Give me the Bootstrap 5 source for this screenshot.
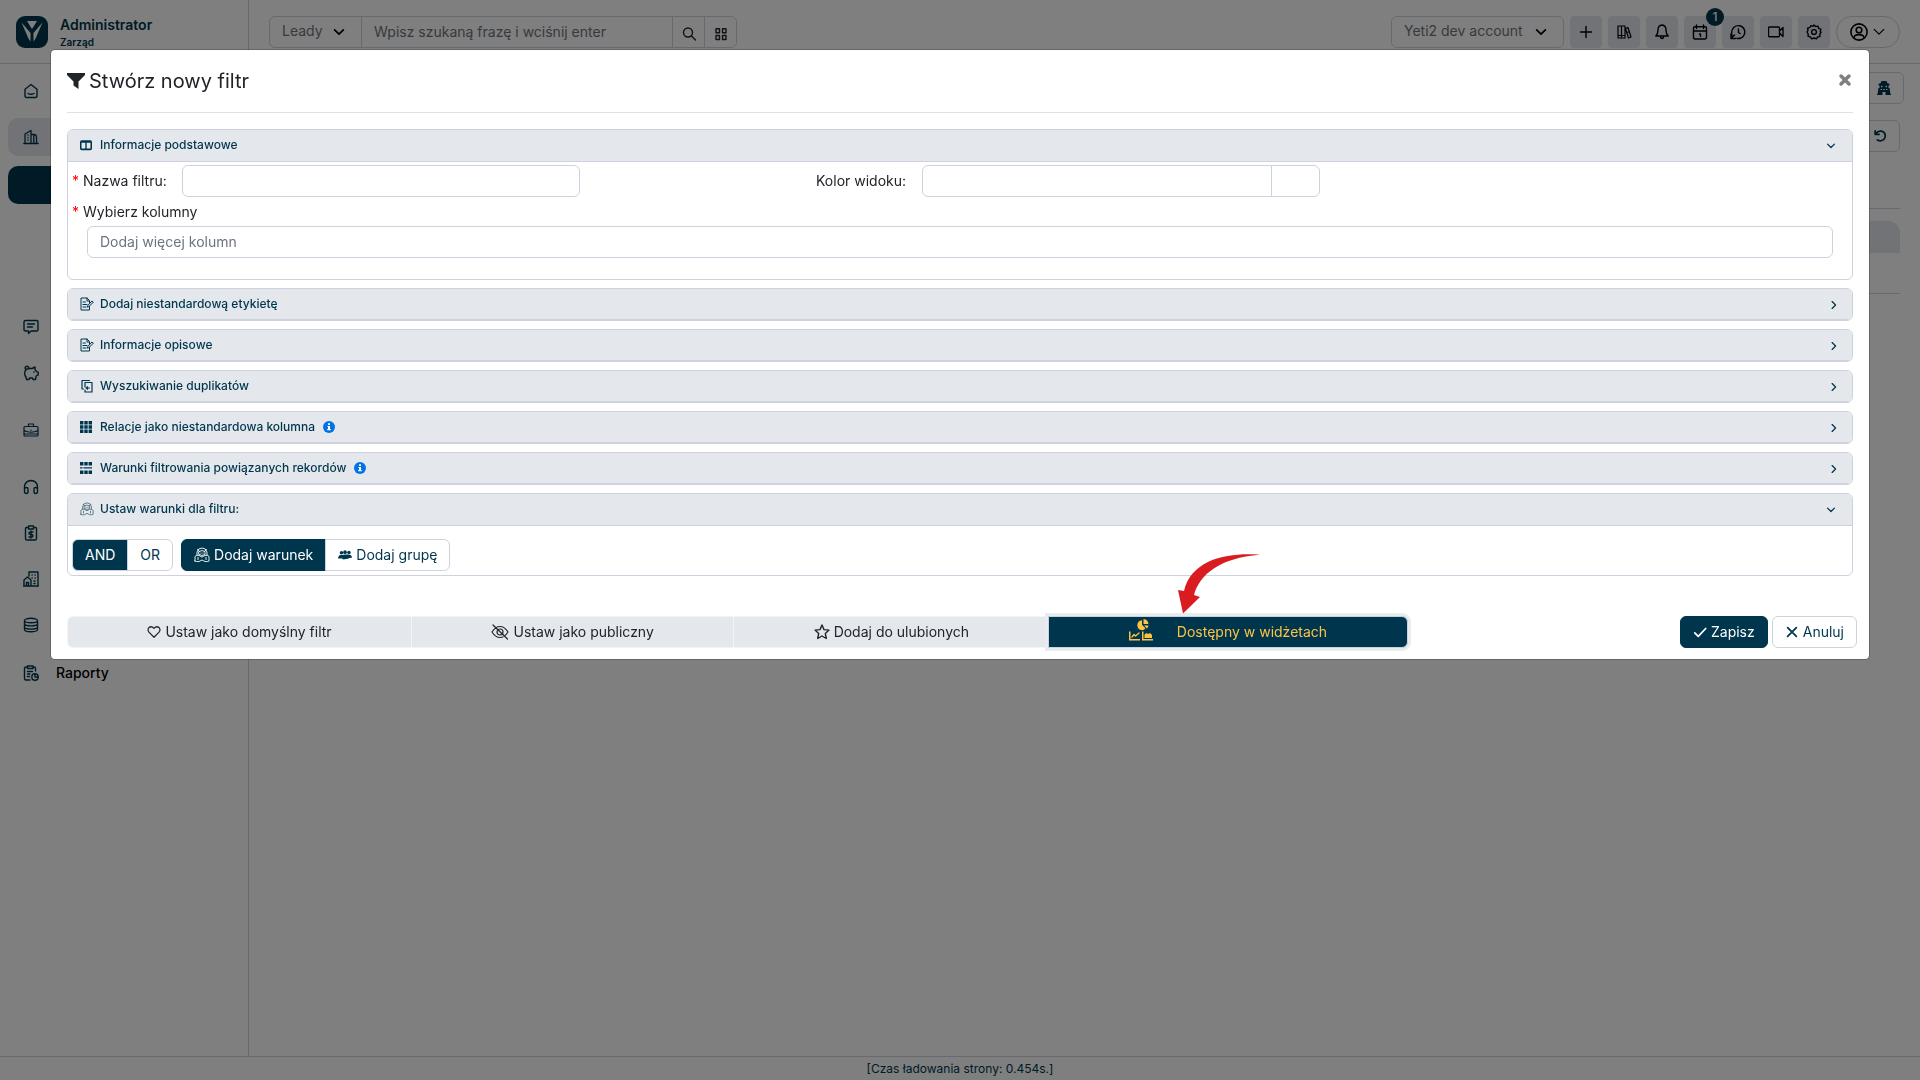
<!DOCTYPE html>
<html lang="pl">
<head>
<meta charset="utf-8">
<meta name="viewport" content="width=device-width, initial-scale=1">
<title>Stwórz nowy filtr</title>
<link rel="stylesheet" href="https://cdn.jsdelivr.net/npm/bootstrap@5.3.0/dist/css/bootstrap.min.css">
<style>
:root{--navy:#00364d;--line:#cdd2de;--soft:#e4e7ec}
body{font-family:Inter,"Noto Sans",sans-serif;font-size:14px;line-height:20px;color:#212529;overflow:hidden}
.ico{width:16px;height:16px;flex:none;fill:none;stroke:currentColor;stroke-width:1.4;stroke-linecap:round;stroke-linejoin:round}
.solid{fill:currentColor;stroke:none}
.ico-sm{width:14px;height:14px}
.ico-lg{width:18px;height:18px}
.navy{color:var(--navy)}
.line{border-color:var(--line)!important}
/* application shell */
.topbar{height:64px}
.topbar-main{padding:16px 20px 0}
.side{width:249px;flex:none}
.logo{width:32px;height:32px}
.who{font-size:14px;line-height:18px;font-weight:600}
.who-sub{font-size:10px;line-height:16px;font-weight:600}
.searchbar{width:468px}
.searchbar .form-select{flex:0 0 93px}
.form-control,.form-select{font-size:14px;line-height:20px;height:32px;padding:4px 12px 6px;border-color:var(--line);border-radius:6px}
.form-select{background-image:url("data:image/svg+xml,%3csvg xmlns='http://www.w3.org/2000/svg' viewBox='0 0 16 16'%3e%3cpath fill='none' stroke='%23000' stroke-width='2' stroke-linecap='round' stroke-linejoin='round' d='M3 5.500l5 5 5-5'/%3e%3c/svg%3e");background-size:14px 14px;background-position:right 15px center;color:#6c757d}
.searchbar .btn{width:33px;height:32px;padding:0;border:1px solid var(--line);border-radius:6px}
.account{width:173px}
.tools{gap:6px}
.tool{width:32px;height:32px;padding:0;border:0;border-radius:4px;background:#e4e6ef;display:flex;align-items:center;justify-content:center}
.user{width:64px;height:32px;padding:0;border:1px solid var(--line);border-radius:16px;color:#000}
.count{width:18px;height:18px;font-size:12px;line-height:18px;padding:0;background:var(--navy);top:-8px;right:-8px;font-weight:500}
.side-nav{padding:8px;gap:8px}
.side-nav .nav-link{height:38px;padding:0 15px;border-radius:10px;color:var(--navy);display:flex;align-items:center}
.side-nav .active{background:#e4e6ef}
.side-main{height:38px;border-radius:10px;background:var(--navy);border:0;margin:2px 0 96px}
.section-gap{margin-top:11px}
.last-gap{margin-top:2px}
.side-text{margin-left:17px;color:#000;font-weight:500}
.side-btn{width:40px;height:32px;padding:0;border-radius:6px}
.list-head{height:32px;background:#e4e6ef;border-radius:12px 12px 0 0}
.load-time{font-size:12px;line-height:24px;height:24px}
/* dialog */
.modal-backdrop{opacity:.5}
.modal-dialog{max-width:none;margin:49px 50px}
.modal-content{border-radius:5px;border-color:rgba(0,0,0,.2)}
.modal-header{margin:0 16px;padding:0 0 1px;height:63px;border-color:#dde0e7}
.modal-title{font-size:20px;line-height:28px;font-weight:400}
.btn-x{border:0;background:none;padding:0 1px 4px;color:#7f7f7f}
.modal-body{padding:16px 16px 0}
.panel{border:1px solid var(--line);border-radius:6px;margin-bottom:8px;overflow:hidden}
.panel-top{height:32px;padding:0 12px 2px;background:var(--soft);border:0;border-bottom:1px solid var(--line);color:var(--navy);font-size:12px;font-weight:500;width:100%;text-align:left;display:flex;align-items:center;gap:6px}
.panel-name{line-height:18px}
.ico-block{width:12px;height:12px;margin-right:2px}
.hint{width:12px;height:12px;margin-left:2px}
.panel .arrow{width:10px;height:10px;margin:3px 4px 0 auto;stroke-width:2}
.panel.closed .panel-top{height:31px;padding-bottom:1px}
.panel.closed .arrow{margin-right:1px}
.panel .fields{padding:3px 4px 21px}
.star{color:red;font-size:14px;width:11px;display:inline-block}
.fld-label{width:110px;flex:none;line-height:20px}
.cols-label{padding-top:5px}
.half{width:calc(54% - 2px);flex:none}
.swatch{width:49px;flex:none;background:#fff}
.pick{margin:4px 15px 0}
.form-control::placeholder{color:#6c757d}
.rules{padding:13px 4px 4px;gap:8px}
.modal .btn{font-size:14px;line-height:20px;padding:5px 12px;border-radius:6px}
.btn-navy{--bs-btn-bg:var(--navy);--bs-btn-color:#fff;--bs-btn-border-color:var(--navy);--bs-btn-hover-bg:#00283a;--bs-btn-hover-color:#fff}
.btn-plain{--bs-btn-bg:#fff;--bs-btn-color:var(--navy);--bs-btn-border-color:var(--line);--bs-btn-hover-bg:var(--soft)}
.modal .btn-group:not(.flags)>.btn{display:inline-flex;align-items:center;gap:4px;flex:none}
.modal .btn-group>.btn:not(:last-child){border-top-right-radius:0;border-bottom-right-radius:0}
.modal .btn-group>.btn:not(:nth-child(-n+2)),.modal .btn-group>button+button{border-top-left-radius:0;border-bottom-left-radius:0}
.btn-check:checked+.btn-plain{background:var(--navy);color:#fff;border-color:var(--line)}
.modal-footer{border:0;padding:40px 12px 11px 16px;flex-wrap:nowrap}
.modal-footer>*{margin:0}
.flags{width:calc(75% - 2px)}
.flags>.btn{display:flex;align-items:center;justify-content:center;gap:4px;background:var(--soft);border:1px solid #f3f4f7;color:#212529}
.flags>.btn-check:checked+.btn{background:var(--navy);border-color:#c9d3df;color:#fdc345;box-shadow:0 0 0 3px #e9ebec;gap:24px}
.widget-ico{width:24px;height:24px;margin:-3px 0 -1px}
.pointer{left:129px;bottom:33px;width:82px;height:60px;pointer-events:none}
.acts .btn{display:flex;align-items:center;gap:4px}
.acts .ico{stroke-width:2}
</style>
<script src="https://cdn.jsdelivr.net/npm/bootstrap@5.3.0/dist/js/bootstrap.bundle.min.js"></script>
</head>
<body>
<svg class="d-none" aria-hidden="true">
  <symbol id="house" viewBox="0 0 16 16"><path d="M2 6.200 8 1.500l6 4.700V13q0 1.500-1.500 1.500h-9Q2 14.500 2 13zM5 10.500q3 1.600 6 0"/></symbol>
  <symbol id="city" viewBox="0 0 16 16"><path d="M.8 14.500h14.400M2 14.500V5l6-3.500v13M8 5.500h3.500q2 .5 2 2.500v6.500M10.800 6v8.500M5 6v.3M5 8.500v.3M5 11v.3" stroke-width="1.300"/></symbol>
  <symbol id="chat" viewBox="0 0 16 16"><path d="M2.500 1.500h11q1.500 0 1.500 1.500v7.500q0 1.500-1.500 1.500H8l-2.500 2.500V12h-3Q1 12 1 10.500V3q0-1.500 1.500-1.500zM4.500 5h7M4.500 8h5"/></symbol>
  <symbol id="pig" viewBox="0 0 16 16"><path d="M3 4.500q-1.500-1-.5-2.500 1.500-1.500 3 0L6 3.500h3L12 2v2.500l1.500 2.200 1.700.5v2.600l-2 1.200-.7 3.500H10l-.5-1.500h-3L6 14.500H3.500L3 12Q.2 8.500 3 4.500L6 3.500M11 7v.2"/></symbol>
  <symbol id="case" viewBox="0 0 16 16"><path d="M2 4.500h12q1 0 1 1v7.500q0 1-1 1H2q-1 0-1-1V5.500q0-1 1-1zM5.500 4.500V2h5v2.500M1 8.500q7 3.500 14 0M8 8v.5M1 12h14" stroke-width="1.200"/></symbol>
  <symbol id="phones" viewBox="0 0 16 16"><path d="M1.500 12V7.500q.8-5.800 6.500-6 5.700.2 6.500 6V12M1.500 10q0-1.500 2-1.500 1.500 0 1.500 1.500v3q0 1.500-1.500 1.500-2 0-2-2zM14.500 10q0-1.500-2-1.500-1.500 0-1.500 1.500v3q0 1.500 1.500 1.500 2 0 2-2z"/></symbol>
  <symbol id="money" viewBox="0 0 16 16"><path d="M5 2.500H3.500q-1 0-1 1v10q0 1.500 1.500 1.500h8q1.500 0 1.500-1.500v-10q0-1-1-1H11M5.500 1h5v3h-5zM10 7H7.500Q6 7 6 8.200t1.500 1.200h1Q10 9.400 10 10.700T8.500 12H6M8 6v7"/></symbol>
  <symbol id="estate" viewBox="0 0 16 16"><path d="M1 15V9l3.500-3L8 9v6M.5 15h15M6 5V1h9v14M3.500 15v-3.500h2V15M9 4h.2M12 4h.2M9 7h.2M12 7h.2M11 10h1M11 12.500h1"/></symbol>
  <symbol id="db" viewBox="0 0 16 16"><path d="M1.500 3.500c0-3 13-3 13 0s-13 3-13 0v9c0 3 13 3 13 0v-9M1.500 7c1 2.500 12 2.500 13 0M1.500 10.200c1 2.500 12 2.500 13 0"/></symbol>
  <symbol id="report" viewBox="0 0 16 16"><path d="M4.500 2H3Q1.500 2 1.500 3.500v10Q1.500 15 3 15h4M11 2q1.500 0 1.500 1.500V6M4.500 1H10v2.500H4.500zM4.500 6.500h5M4.500 9H7M4.500 11.500h2"/><circle cx="12" cy="12" r="3.200"/><path d="M12 9v3h3"/></symbol>
  <symbol id="search" viewBox="0 0 16 16"><circle cx="7" cy="6.500" r="4.500"/><path d="m10.500 10 4 4"/></symbol>
  <symbol id="tiles" viewBox="0 0 16 16"><path d="M3 2.800h3.500v4H3zM9.500 2.800H13v4H9.500zM3 9.500h3.500v4H3zM9.500 9.500H13v4H9.500z"/></symbol>
  <symbol id="plus" viewBox="0 0 16 16"><path d="M8 2.500v11M2.500 8h11"/></symbol>
  <symbol id="books" viewBox="0 0 16 16"><path d="M2 2h3.500v12H2zM5.500 2H9v12H5.500zM9.500 4.500l2.500-1 3 9.500-2.500 1zM2 11.500h7M10.800 8.500l2.500-.8" stroke-width="1.200"/></symbol>
  <symbol id="bell" viewBox="0 0 16 16"><path d="M8 1q4 .5 4 5 0 4 2.200 6H1.800Q4 10 4 6q0-4.500 4-5zM6.500 12.500q0 2 1.500 2t1.500-2"/></symbol>
  <symbol id="cal" viewBox="0 0 16 16"><path d="M3 2.800h10q1.500 0 1.500 1.500v9Q14.500 15 13 15H3q-1.500 0-1.500-1.500v-9Q1.500 2.800 3 2.800zM1.500 7h13M4.500 1v3.500M11.500 1v3.500M7.500 10h1v2.500"/></symbol>
  <symbol id="history" viewBox="0 0 16 16"><path d="M2 11.500Q.5 6.500 4 3.200 7 .8 10.500 2q3.800 1.500 4.300 5.500.1 4.500-3.800 6.500-2.500.8-4 .3M1 10v4.500h4.500M1.500 14l3-3M8.500 5v3.500L10 9.500"/></symbol>
  <symbol id="video" viewBox="0 0 16 16"><path d="M1.500 3h8.800q1.200 0 1.200 1.200v7.300q0 1.200-1.200 1.200H1.500Q.5 12.700.5 11.500V4.200Q.5 3 1.500 3zM11.500 7l3.500-3.500v9L11.500 9"/></symbol>
  <symbol id="gear" viewBox="0 0 16 16"><circle cx="8" cy="8" r="2.400"/><path d="m8 1 1.700 1.600 2.300-.5.600 2.200 2.200.8-.5 2.300L15 8.500l-1.200 1.700.1 2.300-2.200.4-1.300 1.900L8 14l-2.300.9-1.400-2-2.200-.5.100-2.300L1 8l1-1.600-.4-2.200 2.200-.7L5 1.600l2 .8z"/></symbol>
  <symbol id="user" viewBox="0 0 16 16"><circle cx="8" cy="8" r="7.200"/><circle cx="8" cy="6.200" r="2.500"/><path d="M3.500 13q.5-2.700 4.500-2.700t4.500 2.700"/></symbol>
  <symbol id="down" viewBox="0 0 16 16"><path d="m2.500 5 5.500 5.500L13.500 5"/></symbol>
  <symbol id="right" viewBox="0 0 16 16"><path d="M5 2.500 10.500 8 5 13.500"/></symbol>
  <symbol id="shrine" viewBox="0 0 16 16"><path d="M5.500 1h5l.8 2 2.200 1v1.500h-1V8h1L14 11v1l1 3H9.500v-3h-3v3H1l1-3v-1l.5-3h1V5.500h-1V4l2.200-1zM5 5.800v1.400h1.500V5.800zm4.500 0v1.400H11V5.800zM4.500 9v1H6V9zM7.200 9v1h1.600V9zM10 9v1h1.500V9z" fill-rule="evenodd"/></symbol>
  <symbol id="undo" viewBox="0 0 16 16"><path d="M3 5.500q2.500-3.500 6.500-3 4.500 1 4.500 5.500-.5 5-5.500 5.500-2 0-3.500-1M2.500 2v4H7" stroke-width="2"/></symbol>
  <symbol id="funnel" viewBox="0 0 18 16"><path d="M0 0h18v2l-6.500 6.500V16l-5-3.500v-4L0 2z"/></symbol>
  <symbol id="cols" viewBox="0 0 14 14"><path d="M2 1.500h10q2 0 2 2v8q0 1.500-2 1.500H2q-2 0-2-1.500v-8q0-2 2-2zM1.800 4.500v6.700h4.400V4.500zm6 0v6.700h4.400V4.500z" fill-rule="evenodd"/></symbol>
  <symbol id="note" viewBox="0 0 14 14"><path d="M9.500 9.500V13H1V1h6l2.500 2.500V6M7 1v3h2.500M3 5h2.500M3 7.500h4M3 10h3M7.500 9.800l.4-1.500L12 4l1.300 1.200L9 9.500z" stroke-width="1"/></symbol>
  <symbol id="copy" viewBox="0 0 14 14"><path d="M3.500 10H2V1.500h7.500M5 8V3.500h7V13H5v-2M9.500 9H6.500M7.500 7.800 6.200 9l1.300 1.200" stroke-width="1.200"/></symbol>
  <symbol id="grid9" viewBox="0 0 14 14"><path d="M0 0h4v4H0zM5 0h4v4H5zM10 0h4v4h-4zM0 5h4v4H0zM5 5h4v4H5zM10 5h4v4h-4zM0 10h4v4H0zM5 10h4v4H5zM10 10h4v4h-4z"/></symbol>
  <symbol id="gridrow" viewBox="0 0 14 14"><path d="M0 0h4v4H0zM5 0h4v4H5zM10 0h4v4h-4zM0 6h3v1.500H0zM4 6h10v1.500H4zM0 10h4v4H0zM5 10h4v4H5zM10 10h4v4h-4z"/></symbol>
  <symbol id="cond" viewBox="0 0 16 16"><path d="M3 8V5q1-4 5-4t5 4v3M5 4.500q3-2 6 0v3q-3 2-6 0zM1 14V9.500q1.500-2 4-1L8 10l3-1.500q2.500-1 4 1V14q-1.500 1-4 .5L8 13l-3 1.500Q2.500 15 1 14zM4 10.500v2M12 10.500v2M7 6v.2M9 6v.2M3.500 2.500l2 2M12.500 2.500l-2 2" stroke-width=".9"/></symbol>
  <symbol id="people" viewBox="0 0 16 16"><circle cx="4" cy="5.500" r="2"/><circle cx="8" cy="4.800" r="2.100"/><circle cx="12.500" cy="5" r="2"/><path d="M0 12q.5-4 3-4h2q2-1 5-.5Q15.500 6.500 16 11l-3 .5-1.500.8-6 .7L5 12z"/></symbol>
  <symbol id="info" viewBox="0 0 12 12"><circle cx="6" cy="6" r="6" fill="#0073e6"/><path d="M5 2.200h2V4H5zM4.500 5H7v3h.8v1.200H4.200V8H5V6h-.5z" fill="#fff"/></symbol>
  <symbol id="heart" viewBox="0 0 16 16"><path d="M8 14 2.200 8.200Q.2 5.500 2 3.200 5 .5 8 3.800 11 .5 14 3.200q1.800 2.300-.2 5z"/></symbol>
  <symbol id="eyeoff" viewBox="0 0 18 16"><path d="M1 8q3.500-5.500 8-5.500T17 8q-3.500 5.500-8 5.500T1 8zM2 1l14.500 14" stroke-width="1.200"/><circle cx="9" cy="8" r="3" stroke-width="1.200"/></symbol>
  <symbol id="fav" viewBox="0 0 16 16"><path d="m8 1 2 4.600 5 .5-3.700 3.400 1 5L8 12l-4.300 2.500 1-5L1 6.100l5-.5z"/></symbol>
  <symbol id="charts" viewBox="0 0 24 24"><path d="M13 1.200v4.600l3.500 3.800q-1.500 1.600-3.500 1.600-4.500-.4-4.700-5Q8.500 1.600 13 1.200zM14.500 0q4.500.5 5 5h-5zM15 6.500h4.500q-.2 1.700-1.500 3zM0 12.500h1.500V20H11v1.500H0zM13 12.500h1.500V20H24v1.500H13zM15.500 19v-3.500l2-1.500 1.500 1 2-1 2 2v3z"/><path d="m3 18 2-2.500 1.500 1.500L10 14" fill="none" stroke="currentColor" stroke-width="1.300"/></symbol>
  <symbol id="check" viewBox="0 0 16 16"><path d="m2 9 4 4L14.500 4"/></symbol>
  <symbol id="cross" viewBox="0 0 16 16"><path d="m3 3 10 10M13 3 3 13"/></symbol>
</svg>

<div class="d-flex flex-column vh-100">
  <header class="topbar d-flex border-bottom line">
    <div class="side d-flex align-items-start border-end line navy ps-3 pt-3">
      <svg class="logo" viewBox="0 0 32 32"><rect width="32" height="32" rx="9" fill="#00364d"/><path d="M5.500 6.500 14.500 17v8.500l-2-3zM26.500 6.500l-9 10.500v8.500l2-3zM11 5h10l-4.600 7.500h-.8zM8.500 9.500 13 17l-1 5M23.500 9.500 19 17l1 5" fill="#fff"/></svg>
      <div class="ms-2 ps-1">
        <div class="who">Administrator</div>
        <div class="who-sub">Zarząd</div>
      </div>
    </div>
    <div class="topbar-main d-flex flex-fill align-items-start justify-content-between">
      <div class="input-group searchbar">
        <select class="form-select" aria-label="Moduł"><option>Leady</option></select>
        <input class="form-control" type="search" placeholder="Wpisz szukaną frazę i wciśnij enter" aria-label="Szukaj">
        <button class="btn" type="button" aria-label="Szukaj"><svg class="ico"><use href="#search"/></svg></button>
        <button class="btn" type="button" aria-label="Zaawansowane"><svg class="ico"><use href="#tiles"/></svg></button>
      </div>
      <div class="d-flex tools">
        <select class="form-select account" aria-label="Konto"><option>Yeti2 dev account</option></select>
        <button class="tool" type="button" aria-label="Dodaj"><svg class="ico"><use href="#plus"/></svg></button>
        <button class="tool" type="button" aria-label="Biblioteka"><svg class="ico"><use href="#books"/></svg></button>
        <button class="tool" type="button" aria-label="Powiadomienia"><svg class="ico"><use href="#bell"/></svg></button>
        <button class="tool position-relative" type="button" aria-label="Kalendarz"><svg class="ico"><use href="#cal"/></svg><span class="badge rounded-circle position-absolute count">1</span></button>
        <button class="tool" type="button" aria-label="Historia"><svg class="ico"><use href="#history"/></svg></button>
        <button class="tool" type="button" aria-label="Wideo"><svg class="ico"><use href="#video"/></svg></button>
        <button class="tool" type="button" aria-label="Ustawienia"><svg class="ico"><use href="#gear"/></svg></button>
        <button class="btn user d-flex align-items-center justify-content-center gap-1" type="button" aria-label="Użytkownik"><svg class="ico ico-lg"><use href="#user"/></svg><svg class="ico ico-sm"><use href="#down"/></svg></button>
      </div>
    </div>
  </header>
  <div class="d-flex flex-fill">
    <aside class="side border-end line">
      <nav class="nav flex-column side-nav" aria-label="Menu">
        <a class="nav-link" href="#" aria-label="Start"><svg class="ico"><use href="#house"/></svg></a>
        <a class="nav-link active" href="#" aria-label="Firmy"><svg class="ico"><use href="#city"/></svg></a>
        <button class="side-main" type="button" aria-label="Leady"></button>
        <a class="nav-link" href="#" aria-label="Wiadomości"><svg class="ico"><use href="#chat"/></svg></a>
        <a class="nav-link" href="#" aria-label="Finanse"><svg class="ico"><use href="#pig"/></svg></a>
        <a class="nav-link section-gap" href="#" aria-label="Sprzedaż"><svg class="ico"><use href="#case"/></svg></a>
        <a class="nav-link section-gap" href="#" aria-label="Wsparcie"><svg class="ico"><use href="#phones"/></svg></a>
        <a class="nav-link" href="#" aria-label="Księgowość"><svg class="ico"><use href="#money"/></svg></a>
        <a class="nav-link" href="#" aria-label="Nieruchomości"><svg class="ico"><use href="#estate"/></svg></a>
        <a class="nav-link" href="#" aria-label="Baza"><svg class="ico"><use href="#db"/></svg></a>
        <a class="nav-link last-gap" href="#"><svg class="ico"><use href="#report"/></svg><span class="side-text">Raporty</span></a>
      </nav>
    </aside>
    <main class="flex-fill px-3 pt-2">
      <div class="d-flex justify-content-end mb-3"><button class="btn border line side-btn navy d-flex align-items-center justify-content-center" type="button" aria-label="Widok"><svg class="ico solid"><use href="#shrine"/></svg></button></div>
      <div class="px-1">
        <div class="d-flex justify-content-end pb-5 border-bottom line"><button class="btn border line side-btn navy d-flex align-items-center justify-content-center mb-2" type="button" aria-label="Cofnij"><svg class="ico ico-sm"><use href="#undo"/></svg></button></div>
        <div class="pt-2"><div class="list-head mt-1"></div></div>
        <div class="border-bottom line pt-4 pb-3"></div>
      </div>
    </main>
  </div>
  <footer class="load-time border-top line text-center navy">[Czas ładowania strony: 0.454s.]</footer>
</div>

<div class="modal-backdrop"></div>
<div class="modal d-block" tabindex="-1" role="dialog" aria-labelledby="dlg-title">
  <div class="modal-dialog">
    <form class="modal-content">
      <div class="modal-header">
        <h1 class="modal-title d-flex align-items-center" id="dlg-title"><svg class="ico ico-lg solid me-1"><use href="#funnel"/></svg>Stwórz nowy filtr</h1>
        <button class="btn-x" type="button" aria-label="Zamknij"><svg class="ico ico-sm"><path d="m3 3 8 8M11 3l-8 8" stroke-width="3.500"/></svg></button>
      </div>
      <div class="modal-body">
        <section class="panel">
          <button class="panel-top" type="button"><svg class="ico solid ico-block"><use href="#cols"/></svg><span class="panel-name">Informacje podstawowe</span><svg class="ico arrow"><use href="#down"/></svg></button>
          <div class="fields">
            <div class="row g-0">
              <div class="col-5 d-flex align-items-center">
                <label class="fld-label" for="fname"><span class="star">*</span>Nazwa filtru:</label>
                <input class="form-control half" id="fname" type="text">
              </div>
              <div class="col-5 d-flex align-items-center">
                <label class="fld-label ps-1" for="fcolor">Kolor widoku:</label>
                <div class="input-group half"><input class="form-control" id="fcolor" type="text"><span class="input-group-text swatch line"></span></div>
              </div>
            </div>
            <label class="d-block cols-label" for="fcols"><span class="star">*</span>Wybierz kolumny</label>
            <div class="pick"><input class="form-control" id="fcols" type="text" placeholder="Dodaj więcej kolumn"></div>
          </div>
        </section>
        <section class="panel closed"><button class="panel-top" type="button"><svg class="ico ico-sm"><use href="#note"/></svg><span class="panel-name">Dodaj niestandardową etykietę</span><svg class="ico arrow"><use href="#right"/></svg></button></section>
        <section class="panel closed"><button class="panel-top" type="button"><svg class="ico ico-sm"><use href="#note"/></svg><span class="panel-name">Informacje opisowe</span><svg class="ico arrow"><use href="#right"/></svg></button></section>
        <section class="panel closed"><button class="panel-top" type="button"><svg class="ico ico-sm"><use href="#copy"/></svg><span class="panel-name">Wyszukiwanie duplikatów</span><svg class="ico arrow"><use href="#right"/></svg></button></section>
        <section class="panel closed"><button class="panel-top" type="button"><svg class="ico solid ico-block"><use href="#grid9"/></svg><span class="panel-name">Relacje jako niestandardowa kolumna</span><svg class="ico solid hint"><use href="#info"/></svg><svg class="ico arrow"><use href="#right"/></svg></button></section>
        <section class="panel closed"><button class="panel-top" type="button"><svg class="ico solid ico-block"><use href="#gridrow"/></svg><span class="panel-name">Warunki filtrowania powiązanych rekordów</span><svg class="ico solid hint"><use href="#info"/></svg><svg class="ico arrow"><use href="#right"/></svg></button></section>
        <section class="panel mb-0">
          <button class="panel-top" type="button"><svg class="ico ico-sm opacity-75"><use href="#cond"/></svg><span class="panel-name">Ustaw warunki dla filtru:</span><svg class="ico arrow"><use href="#down"/></svg></button>
          <div class="rules d-flex">
            <div class="btn-group" role="group">
              <input class="btn-check" type="radio" name="join" id="jand" checked><label class="btn btn-plain" for="jand">AND</label>
              <input class="btn-check" type="radio" name="join" id="jor"><label class="btn btn-plain" for="jor">OR</label>
            </div>
            <div class="btn-group" role="group">
              <button class="btn btn-navy" type="button"><svg class="ico"><use href="#cond"/></svg>Dodaj warunek</button>
              <button class="btn btn-plain" type="button"><svg class="ico ico-sm solid"><use href="#people"/></svg>Dodaj grupę</button>
            </div>
          </div>
        </section>
      </div>
      <div class="modal-footer justify-content-between">
        <div class="btn-group flags" role="group">
          <input class="btn-check" type="checkbox" id="f1"><label class="btn" for="f1"><svg class="ico ico-sm"><use href="#heart"/></svg>Ustaw jako domyślny filtr</label>
          <input class="btn-check" type="checkbox" id="f2"><label class="btn" for="f2"><svg class="ico ico-lg"><use href="#eyeoff"/></svg>Ustaw jako publiczny</label>
          <input class="btn-check" type="checkbox" id="f3"><label class="btn" for="f3"><svg class="ico"><use href="#fav"/></svg>Dodaj do ulubionych</label>
          <input class="btn-check" type="checkbox" id="f4" checked><label class="btn position-relative" for="f4"><svg class="ico solid widget-ico"><use href="#charts"/></svg>Dostępny w widżetach
            <svg class="pointer position-absolute" viewBox="0 0 82 60" aria-hidden="true"><path d="M82 .8C52-1.500 14 4 6 37L0 36l5 23.500L22 43l-6-2C22 20 42 4 82 .8z" fill="#d91c1f"/></svg></label>
        </div>
        <div class="acts d-flex gap-1">
          <button class="btn btn-navy" type="submit"><svg class="ico ico-sm"><use href="#check"/></svg>Zapisz</button>
          <button class="btn btn-plain" type="button"><svg class="ico ico-sm"><use href="#cross"/></svg>Anuluj</button>
        </div>
      </div>
    </form>
  </div>
</div>
</body>
</html>
